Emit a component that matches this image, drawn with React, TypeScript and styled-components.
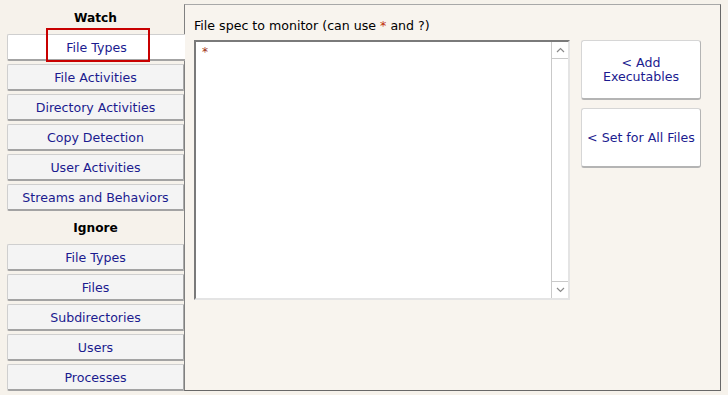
import React, { useState } from 'react'
import styled, { createGlobalStyle } from 'styled-components'

const GlobalStyle = createGlobalStyle`
  html, body {
    margin: 0;
    padding: 0;
    background: #f6f2eb;
  }
  body {
    font-family: "DejaVu Sans", Verdana, sans-serif;
    font-size: 12.6px;
  }
`

const Page = styled.div`
  width: 728px;
  height: 395px;
  display: flex;
  align-items: flex-start;
  padding-left: 7px;
  box-sizing: border-box;
  background: #f6f2eb;
`

const SideColumn = styled.div`
  width: 177px;
  padding-top: 4px;
  display: flex;
  flex-direction: column;
  gap: 3px;
`

const GroupLabel = styled.div`
  height: 27px;
  display: flex;
  align-items: center;
  justify-content: center;
  padding-top: 1px;
  box-sizing: border-box;
  font-weight: bold;
  color: #000;
  font-size: 12.2px;
`

const NavButton = styled.button<{ $active?: boolean }>`
  position: relative;
  height: 27px;
  width: ${props => props.$active ? '178px' : '177px'};
  padding: 1px 0 0;
  margin: 0;
  font-family: inherit;
  font-size: 12.6px;
  color: #1b1b8f;
  background: ${props => props.$active ? '#ffffff' : '#f4f4f4'};
  border-top: 1px solid #cfcfcf;
  border-left: 1px solid #cfcfcf;
  border-right: ${props => props.$active ? 'none' : '1px solid #a9a9a9'};
  border-bottom: 2px solid #a3a3a3;
  border-radius: 2px 0 0 2px;
  z-index: ${props => props.$active ? 2 : 0};
  cursor: pointer;
`

const Highlight = styled.span`
  position: absolute;
  left: 38px;
  top: -7px;
  width: 104px;
  height: 34px;
  box-sizing: border-box;
  border: 2px solid #c80000;
  pointer-events: none;
`

const Panel = styled.div`
  margin-top: 4px;
  width: 537px;
  height: 387px;
  box-sizing: border-box;
  background: #f8f4ee;
  border-top: 1px solid #a8a8a8;
  border-left: 1px solid #808080;
  border-right: 1px solid #686868;
  border-bottom: 1px solid #686868;
  padding: 13px 0 0 9px;
  position: relative;
  z-index: 1;
`

const SpecLabel = styled.div`
  height: 16px;
  line-height: 16px;
  margin-bottom: 6px;
  color: #000;
  font-size: 12.6px;
`

const Wild = styled.span`
  color: #c0300a;
`

const SpecRow = styled.div`
  display: flex;
  align-items: flex-start;
  gap: 11px;
`

const SpecBox = styled.div`
  width: 376px;
  height: 260px;
  box-sizing: border-box;
  background: #fff;
  border-style: solid;
  border-width: 2px 2px 2px 2px;
  border-color: #7a7a7a #e4e4e4 #e4e4e4 #7a7a7a;
  display: flex;
`

const SpecText = styled.div`
  flex: 1;
  padding: 3px 0 0 6px;
  color: #a03010;
  font-size: 12px;
  line-height: 14px;
`

const ScrollBar = styled.div`
  width: 16px;
  border-left: 1px solid #c9c9c9;
  display: flex;
  flex-direction: column;
  background: #fff;
`

const ScrollArrow = styled.div`
  height: 16px;
  display: flex;
  align-items: center;
  justify-content: center;
  border-top: ${props => props.title === 'down' ? '1px solid #c9c9c9' : 'none'};
  border-bottom: ${props => props.title === 'up' ? '1px solid #c9c9c9' : 'none'};
`

const ScrollTrack = styled.div`
  flex: 1;
`

const ActionColumn = styled.div`
  display: flex;
  flex-direction: column;
  gap: 8px;
`

const ActionButton = styled.button`
  width: 120px;
  height: 60px;
  padding: 0;
  font-family: inherit;
  font-size: 12.6px;
  line-height: 14px;
  color: #1b1b8f;
  background: #fff;
  border-top: 1px solid #d6d6d6;
  border-left: 1px solid #d6d6d6;
  border-right: 1px solid #b4b4b4;
  border-bottom: 2px solid #b4b4b4;
  border-radius: 3px;
  cursor: pointer;
`

const Chevron = ({ up }: { up?: boolean }) => (
  <svg width="9" height="6" viewBox="0 0 9 6">
    <path
      d={up ? 'M1 5 L4.5 1.5 L8 5' : 'M1 1 L4.5 4.5 L8 1'}
      fill="none"
      stroke="#8a8a8a"
      strokeWidth="1.2"
    />
  </svg>
)

const watchItems = ['File Types', 'File Activities', 'Directory Activities', 'Copy Detection', 'User Activities', 'Streams and Behaviors']
const ignoreItems = ['File Types', 'Files', 'Subdirectories', 'Users', 'Processes']

export default function App() {
  const [selected, setSelected] = useState('watch-File Types')

  const renderItem = (group: string, label: string) => {
    const key = `${group}-${label}`
    const active = selected === key
    return (
      <NavButton key={key} $active={active} onClick={() => setSelected(key)}>
        {label}
        {key === 'watch-File Types' && <Highlight />}
      </NavButton>
    )
  }

  return (
    <Page>
      <GlobalStyle />
      <SideColumn>
        <GroupLabel>Watch</GroupLabel>
        {watchItems.map(item => renderItem('watch', item))}
        <GroupLabel>Ignore</GroupLabel>
        {ignoreItems.map(item => renderItem('ignore', item))}
      </SideColumn>
      <Panel>
        <SpecLabel>
          File spec to monitor (can use <Wild>*</Wild> and ?)
        </SpecLabel>
        <SpecRow>
          <SpecBox>
            <SpecText>*</SpecText>
            <ScrollBar>
              <ScrollArrow title="up"><Chevron up /></ScrollArrow>
              <ScrollTrack />
              <ScrollArrow title="down"><Chevron /></ScrollArrow>
            </ScrollBar>
          </SpecBox>
          <ActionColumn>
            <ActionButton>&lt; Add<br />Executables</ActionButton>
            <ActionButton>&lt; Set for All Files</ActionButton>
          </ActionColumn>
        </SpecRow>
      </Panel>
    </Page>
  )
}
